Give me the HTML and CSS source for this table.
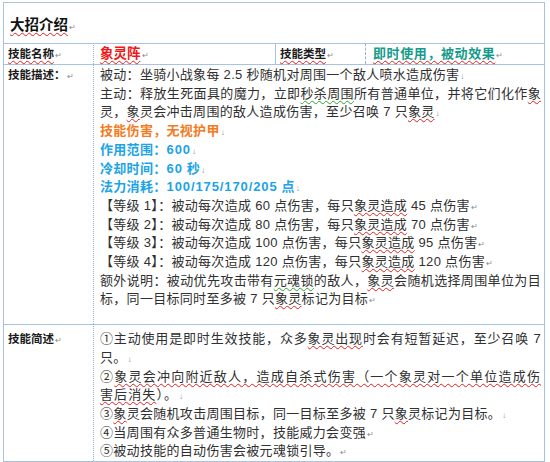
FILE: index.html
```html
<!DOCTYPE html>
<html lang="zh-CN">
<head>
<meta charset="utf-8">
<title>大招介绍</title>
<link rel="stylesheet" href="styles.css">
</head>
<body>
<table class="doc">
  <colgroup>
    <col class="c1"><col class="c2"><col class="c3"><col class="c4">
  </colgroup>
  <tr class="row-title">
    <td colspan="4"><span class="title sp">大招介绍</span><span class="pm">↵</span></td>
  </tr>
  <tr class="row-head">
    <td class="label"><span class="sp">技能名称</span><span class="pm">↵</span></td>
    <td class="dot name"><span class="sp">象灵阵</span><span class="pm">↵</span></td>
    <td class="label"><span class="sp">技能类型</span><span class="pm">↵</span></td>
    <td class="dash kind"><span class="sp">即时使用，被动效果</span><span class="pm">↵</span></td>
  </tr>
  <tr class="row-desc">
    <td class="label">技能描述：<span class="pm">↵</span></td>
    <td class="dot body" colspan="3">
      <p>被动：坐骑小战象每 2.5 秒随机对周围一个敌人喷水造成伤害<span class="pm">↓</span><br>主动：释放生死面具的魔力，立即<span class="sg">秒杀周围</span>所有普通单位，并将它们化作<span class="sp">象</span>灵，<span class="sp">象</span>灵会冲击周围的敌人造成伤害，至少召唤 7 只<span class="sp">象灵</span><span class="pm">↓</span></p>
      <p class="orange">技能伤害，无视护甲<span class="pm">↓</span></p>
      <p class="blue">作用范围：<b>600</b><span class="pm">↓</span><br>冷却时间：<b>60</b> 秒<span class="pm">↓</span><br>法力消耗：<b>100/175/170/205</b> 点<span class="pm">↓</span></p>
      <p>【等级 1】：被动每次造成 60 点伤害，每只<span class="sp">象灵造成</span> 45 点伤害<span class="pm">↵</span></p>
      <p>【等级 2】：被动每次造成 80 点伤害，每只<span class="sp">象灵造成</span> 70 点伤害<span class="pm">↵</span></p>
      <p>【等级 3】：被动每次造成 100 点伤害，每只<span class="sp">象灵造成</span> 95 点伤害<span class="pm">↵</span></p>
      <p>【等级 4】：被动每次造成 120 点伤害，每只<span class="sp">象灵造成</span> 120 点伤害<span class="pm">↵</span></p>
      <p>额外说明：被动优先攻击带有<span class="sg">元魂锁</span>的敌人，<span class="sp">象灵</span>会随机选择周围单位为目标，同一目标同时至多被 7 只<span class="sp">象灵</span>标记为目标<span class="pm">↵</span></p>
    </td>
  </tr>
  <tr class="row-brief">
    <td class="label">技能简述<span class="pm">↵</span></td>
    <td class="dot body" colspan="3">
      <p>①主动使用是即时生效技能，众多<span class="sp">象灵出现</span>时会有短暂延迟，至少召唤 7 只。<span class="pm">↓</span><br><span class="wide">②<span class="sp">象灵会冲向附近敌人，造成自杀式伤害（一个象灵对一个单位造成伤害后消失</span>）。</span><span class="pm">↓</span><br>③<span class="sp">象</span>灵会随机攻击周围目标，同一目标至多被 7 只<span class="sp">象</span>灵标记为目标。<span class="pm">↓</span><br>④当周围有众多普通生物时，技能威力会变强<span class="pm">↵</span></p>
      <p>⑤被动技能的自动伤害会被元魂锁引导。<span class="pm">↵</span></p>
    </td>
  </tr>
</table>
</body>
</html>
```

FILE: styles.css
```css
html, body {
  margin: 0;
  padding: 0;
  background: #ffffff;
}

body {
  padding: 2px 0 0 3px;
  font-family: "Liberation Sans", "Noto Sans CJK SC", sans-serif;
  color: #303030;
}

.doc {
  width: 542px;
  table-layout: fixed;
  border-collapse: separate;
  border-spacing: 0;
  border-right: 1px solid #a6c2e8;
  border-bottom: 1px solid #a6c2e8;
}

.c1 { width: 90px; }
.c2 { width: 182px; }
.c3 { width: 90px; }
.c4 { width: 179px; }

.doc td {
  border-top: 1px solid #a6c2e8;
  border-left: 1px solid #a6c2e8;
  padding: 0 3px 0 4px;
  vertical-align: top;
}

.doc td.dot {
  border-left: 1px dotted #8fb2e2;
  padding-left: 6px;
}

.doc td.dash {
  border-left: 1px dashed #8fb2e2;
  padding-left: 7px;
}

.row-title td {
  height: 40px;
  vertical-align: middle;
  padding-left: 6px;
}

.title {
  font-size: 14.5px;
  font-weight: bold;
  color: #111111;
}

.row-head td {
  height: 20px;
  vertical-align: middle;
}

.label {
  font-size: 11.5px;
  font-weight: bold;
  color: #1a1a1a;
  line-height: 18.7px;
}

.row-head .label {
  line-height: 20px;
}

.name {
  font-size: 13.5px;
  font-weight: bold;
  color: #f01818;
  line-height: 20px;
}

.kind {
  font-size: 13px;
  font-weight: bold;
  color: #169b8b;
  letter-spacing: 0.6px;
  line-height: 20px;
}

.body {
  font-size: 13px;
  letter-spacing: 0.3px;
  line-height: 18.7px;
  text-align: justify;
}

.body p {
  margin: 0;
}

.wide {
  letter-spacing: 1.1px;
}

.row-desc td {
  padding-top: 1px;
  padding-bottom: 15px;
}

.row-brief td {
  padding-top: 5px;
  padding-bottom: 0;
}

.row-desc .label {
  padding-top: 1px;
}

.orange {
  color: #f37b22;
  font-weight: bold;
}

.blue {
  color: #1ca4e6;
  font-weight: bold;
}

.blue b {
  letter-spacing: 0.9px;
}

.sp {
  text-decoration: underline wavy #e02020;
  text-decoration-thickness: 1px;
  text-underline-offset: 2px;
  text-decoration-skip-ink: none;
}

.sg {
  text-decoration: underline wavy #30a030;
  text-decoration-thickness: 1px;
  text-underline-offset: 2px;
  text-decoration-skip-ink: none;
}

.pm {
  font-size: 8px;
  line-height: 0;
  font-weight: normal;
  color: #8a8a8a;
  letter-spacing: 0;
  margin-left: 1px;
}
```
